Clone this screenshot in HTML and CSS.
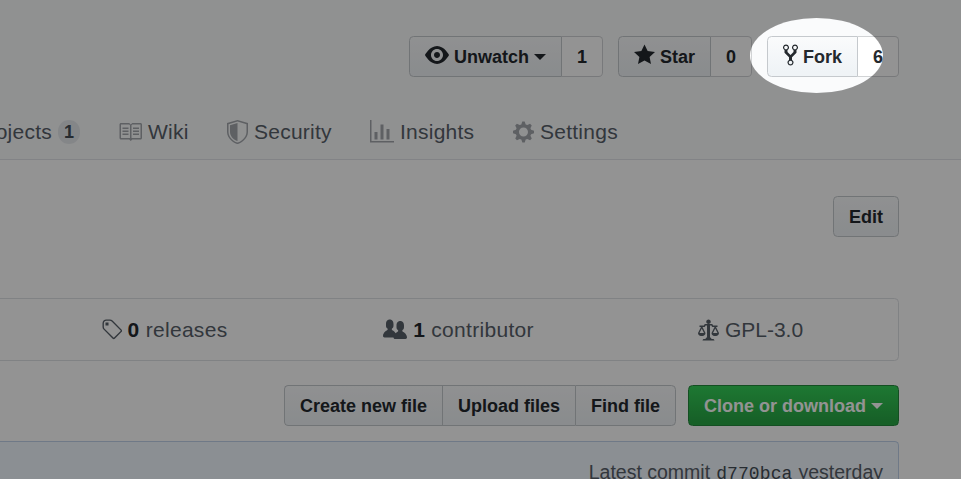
FILE: index.html
```html
<!DOCTYPE html>
<html lang="en">
<head>
<meta charset="utf-8">
<title>Repository</title>
<link rel="stylesheet" href="styles.css">
</head>
<body>
<header class="repo-head">
  <ul class="actions">
    <li class="social">
      <button class="btn btn-watch"><svg width="24" height="24" viewBox="0 0 16 16"><path d="M8.06 2C3 2 0 8 0 8s3 6 8.06 6C13 14 16 8 16 8s-3-6-7.94-6zM8 12c-2.2 0-4-1.78-4-4 0-2.2 1.8-4 4-4 2.22 0 4 1.8 4 4 0 2.22-1.78 4-4 4zm2-4c0 1.11-.89 2-2 2-1.11 0-2-.89-2-2 0-1.11.89-2 2-2 1.11 0 2 .89 2 2z"/></svg><span>Unwatch</span><i class="caret"></i></button><a class="count">1</a>
    </li>
    <li class="social">
      <button class="btn btn-star"><svg width="21" height="24" viewBox="0 0 14 16"><path d="M14 6l-4.9-.64L7 1 4.9 5.36 0 6l3.6 3.26L2.67 14 7 11.67 11.33 14l-.93-4.74L14 6z"/></svg><span>Star</span></button><a class="count">0</a>
    </li>
    <li class="social">
      <button class="btn btn-fork"><svg width="15" height="24" viewBox="0 0 10 16"><path d="M8 1a1.993 1.993 0 0 0-1 3.72V6L5 8 3 6V4.72A1.993 1.993 0 0 0 2 1a1.993 1.993 0 0 0-1 3.72V6.5l3 3v1.78A1.993 1.993 0 0 0 5 15a1.993 1.993 0 0 0 1-3.72V9.5l3-3V4.72A1.993 1.993 0 0 0 8 1zM2 4.2C1.34 4.2.8 3.65.8 3c0-.65.55-1.2 1.2-1.2.65 0 1.2.55 1.2 1.2 0 .65-.55 1.2-1.2 1.2zm3 10c-.66 0-1.2-.55-1.2-1.2 0-.65.55-1.2 1.2-1.2.65 0 1.2.55 1.2 1.2 0 .65-.55 1.2-1.2 1.2zm3-10c-.66 0-1.2-.55-1.2-1.2 0-.65.55-1.2 1.2-1.2.65 0 1.2.55 1.2 1.2 0 .65-.55 1.2-1.2 1.2z"/></svg><span>Fork</span></button><a class="count">6</a>
    </li>
  </ul>
  <nav class="tabs">
    <a class="tab tab-projects"><span>Projects</span><b class="counter">1</b></a>
    <a class="tab tab-wiki"><svg width="24" height="24" viewBox="0 0 16 16"><path d="M3 5h4v1H3V5zm0 3h4V7H3v1zm0 2h4V9H3v1zm11-5h-4v1h4V5zm0 2h-4v1h4V7zm0 2h-4v1h4V9zm2-6v9c0 .55-.45 1-1 1H9.5l-1 1-1-1H2c-.55 0-1-.45-1-1V3c0-.55.45-1 1-1h5.5l1 1 1-1H15c.55 0 1 .45 1 1zm-8 .5L7.5 3H2v9h6V3.5zm7-.5H9.5l-.5.5V12h6V3z"/></svg><span>Wiki</span></a>
    <a class="tab tab-wide"><svg width="21" height="24" viewBox="0 0 14 16"><path fill-rule="evenodd" d="M0 2l7-2 7 2v6.02C14 12.69 8.69 16 7 16c-1.69 0-7-3.31-7-7.98V2zm1 .75L7 1l6 1.75v5.268C13 12.104 8.449 15 7 15c-1.449 0-6-2.896-6-6.982V2.75zm1 .75L7 2v12c-1.207 0-5-2.482-5-5.985V3.5z"/></svg><span>Security</span></a>
    <a class="tab tab-wide"><svg width="24" height="24" viewBox="0 0 16 16"><path d="M16 14v1H0V0h1v14h15zM5 13H3V8h2v5zm4 0H7V3h2v10zm4 0h-2V6h2v7z"/></svg><span>Insights</span></a>
    <a class="tab"><svg width="21" height="24" viewBox="0 0 14 16"><path d="M14 8.77v-1.6l-1.94-.64-.45-1.09.88-1.84-1.13-1.13-1.81.91-1.09-.45-.69-1.92h-1.6l-.63 1.94-1.11.45-1.84-.88-1.13 1.13.91 1.81-.45 1.09L0 7.23v1.59l1.94.64.45 1.09-.88 1.84 1.13 1.13 1.81-.91 1.09.45.69 1.92h1.59l.63-1.94 1.11-.45 1.84.88 1.13-1.13-.92-1.81.47-1.09L14 8.75v.02zM7 11c-1.66 0-3-1.34-3-3s1.34-3 3-3 3 1.34 3 3-1.34 3-3 3z"/></svg><span>Settings</span></a>
  </nav>
</header>
<main class="content">
  <div class="meta"><button class="btn btn-edit">Edit</button></div>
  <div class="summary">
    <a class="stat stat-releases"><svg width="21" height="24" viewBox="0 0 14 16"><path d="M7.73 1.73C7.26 1.26 6.62 1 5.96 1H3.5C2.13 1 1 2.13 1 3.5v2.47c0 .66.27 1.3.73 1.77l6.06 6.06c.39.39 1.02.39 1.41 0l4.59-4.59a.996.996 0 0 0 0-1.41L7.73 1.73zM2.38 7.09c-.31-.3-.47-.7-.47-1.13V3.5c0-.88.72-1.59 1.59-1.59h2.47c.42 0 .83.16 1.13.47l6.14 6.13-4.73 4.73-6.13-6.15zM3.01 3h2v2H3V3h.01z"/></svg><span><b>0</b> releases</span></a>
    <a class="stat"><svg width="24" height="24" viewBox="0 0 16 16"><path d="M16 12.999c0 .439-.45 1-1 1H7.995c-.539 0-.994-.447-.995-.999H1c-.54 0-1-.561-1-1 0-2.634 3-4 3-4s.229-.409 0-1c-.841-.621-1.058-.59-1-3 .058-2.419 1.367-3 2.5-3s2.442.58 2.5 3c.058 2.41-.159 2.379-1 3-.229.59 0 1 0 1s1.549.711 2.42 2.088C9.196 9.369 10 8.999 10 8.999s.229-.409 0-1c-.841-.62-1.058-.59-1-3 .058-2.419 1.367-3 2.5-3s2.437.581 2.495 3c.059 2.41-.158 2.38-1 3-.229.59 0 1 0 1s3.005 1.366 3.005 4"/></svg><span><b>1</b> contributor</span></a>
    <a class="stat stat-license"><svg width="21" height="24" viewBox="0 0 14 16"><path fill-rule="evenodd" d="M7 4c-.83 0-1.5-.67-1.5-1.5S6.17 1 7 1s1.5.67 1.5 1.5S7.83 4 7 4zm7 6c0 1.11-.89 2-2 2h-1c-1.11 0-2-.89-2-2l2-4h-1c-.55 0-1-.45-1-1H8v8c.42 0 1 .45 1 1h1c.42 0 1 .45 1 1H3c0-.55.58-1 1-1h1c0-.55.58-1 1-1h.03L6 5H5c0 .55-.45 1-1 1H3l2 4c0 1.11-.89 2-2 2H2c-1.11 0-2-.89-2-2l2-4H1V5h3c0-.55.45-1 1-1h4c.55 0 1 .45 1 1h3v1h-1l2 4zM2.5 7L1 10h3L2.5 7zM13 10l-1.5-3-1.5 3h3z"/></svg><span>GPL-3.0</span></a>
  </div>
  <div class="file-nav">
    <div class="group">
      <button class="btn btn-create">Create new file</button><button class="btn btn-upload">Upload files</button><button class="btn btn-find">Find file</button>
    </div>
    <button class="btn btn-clone"><span>Clone or download</span><i class="caret"></i></button>
  </div>
  <div class="commit"><span>Latest commit <code>d770bca</code> yesterday</span></div>
</main>
<div class="spotlight"></div>
</body>
</html>
```

FILE: styles.css
```css
* { box-sizing: border-box; }
html, body { height: 100%; }
body {
  margin: 0;
  overflow: hidden;
  position: relative;
  background: #fff;
  color: #24292e;
  font-family: "Liberation Sans", Arial, sans-serif;
  font-size: 21px;
  line-height: 30px;
}
svg { display: block; flex: none; fill: currentColor; }

.repo-head {
  height: 160px;
  padding-top: 36px;
  background: #fafbfc;
  border-bottom: 1px solid #e1e4e8;
}
.actions {
  display: flex;
  justify-content: flex-end;
  gap: 15px;
  margin: 0;
  padding: 0 62px 0 0;
  list-style: none;
}
.social { display: flex; }

.btn {
  display: flex;
  align-items: center;
  height: 41px;
  margin: 0;
  padding: 0 15px;
  border: 1px solid #c5c9cd;
  border-radius: 4.5px;
  background: linear-gradient(-180deg, #fafbfc, #eff3f6 90%);
  color: #24292e;
  font: bold 18px/30px "Liberation Sans", Arial, sans-serif;
  white-space: nowrap;
}
.btn svg { margin-top: -3px; }
.social .btn { border-radius: 4.5px 0 0 4.5px; }
.social .btn span { margin-left: 5px; }
.btn-watch { width: 153px; }
.btn-star { width: 93px; }
.btn-fork { width: 91px; }
.caret {
  flex: none;
  margin-left: 5px;
  border: 6px solid transparent;
  border-top-color: currentColor;
  border-bottom: 0;
}
.count {
  width: 41px;
  height: 41px;
  border: 1px solid #d1d3d5;
  border-left: 0;
  border-radius: 0 4.5px 4.5px 0;
  background: #fff;
  font: bold 18px/40px "Liberation Sans", Arial, sans-serif;
  text-align: center;
}

.tabs {
  display: flex;
  align-items: center;
  height: 30px;
  margin-top: 40px;
  letter-spacing: 0.25px;
}
.tab { display: flex; flex: none; align-items: center; gap: 6px; color: #586069; }
.tab svg { color: #a3a7ac; }
.tab-projects { width: 118px; justify-content: flex-end; padding-right: 38px; }
.tab-wiki { width: 109px; }
.tab-wide { width: 143px; }
.counter {
  flex: none;
  width: 22px;
  height: 24px;
  border-radius: 12px;
  background: #e6e9ec;
  color: #444d56;
  font-size: 18px;
  line-height: 25px;
  letter-spacing: 0;
  text-align: center;
}

.content { padding: 36px 62px 0 0; }
.meta { display: flex; justify-content: flex-end; }
.btn-edit { width: 66px; }
.summary {
  display: grid;
  grid-template-columns: repeat(3, 293px);
  justify-content: end;
  height: 63px;
  margin: 61px 0 24px -10px;
  border: 1px solid #dfe2e5;
  border-radius: 4.5px;
}
.stat {
  display: flex;
  align-items: center;
  justify-content: center;
  gap: 6px;
  color: #586069;
  letter-spacing: 0.3px;
}
.stat b { color: #24292e; }
.stat-releases { padding-right: 3px; }
.stat-license { padding-right: 2px; letter-spacing: 0; }

.file-nav { display: flex; justify-content: flex-end; gap: 12px; }
.group { display: flex; }
.group .btn { border-radius: 0; border-right-width: 0; }
.group .btn-create { width: 158px; border-radius: 4.5px 0 0 4.5px; }
.group .btn-upload { width: 133px; }
.group .btn-find { width: 101px; border-right-width: 1px; border-radius: 0 4.5px 4.5px 0; }
.btn-clone {
  width: 211px;
  border-color: #238a3c;
  background: linear-gradient(-180deg, #34d058, #28a745 90%);
  color: #fff;
}
.commit {
  display: flex;
  justify-content: flex-end;
  height: 38px;
  margin: 15px 0 0 -10px;
  padding: 15px 15px 0;
  overflow: hidden;
  border: 1px solid #c0d3eb;
  border-bottom: 0;
  border-radius: 4.5px 4.5px 0 0;
  background: #f1f8ff;
  color: #586069;
  font-size: 19.5px;
}
.commit code { padding: 0 0.6px; color: #444d56; font: 18px "Liberation Mono", monospace; letter-spacing: 0.1px; }

.spotlight {
  position: absolute;
  left: 750px;
  top: 18px;
  width: 133px;
  height: 75px;
  border-radius: 50%;
  box-shadow: 0 0 0 1200px rgba(0, 0, 0, 0.425);
}
```
